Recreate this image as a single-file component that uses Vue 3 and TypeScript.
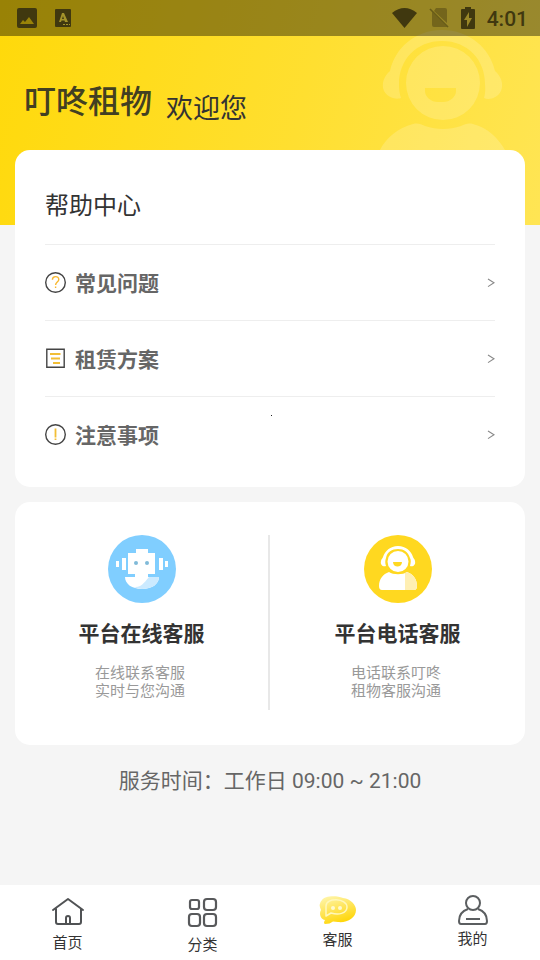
<script setup lang="ts">
interface HelpItem {
  icon: 'question' | 'plan' | 'notice'
  label: string
}

interface Service {
  icon: 'robot' | 'agent'
  title: string
  lines: string[]
}

interface Tab {
  icon: 'home' | 'grid' | 'chat' | 'user'
  label: string
  active?: boolean
}

const helpItems: HelpItem[] = [
  { icon: 'question', label: '常见问题' },
  { icon: 'plan', label: '租赁方案' },
  { icon: 'notice', label: '注意事项' },
]

const services: Service[] = [
  { icon: 'robot', title: '平台在线客服', lines: ['在线联系客服', '实时与您沟通'] },
  { icon: 'agent', title: '平台电话客服', lines: ['电话联系叮咚', '租物客服沟通'] },
]

const tabs: Tab[] = [
  { icon: 'home', label: '首页' },
  { icon: 'grid', label: '分类' },
  { icon: 'chat', label: '客服', active: true },
  { icon: 'user', label: '我的' },
]
</script>

<template>
  <div class="page">
    <header class="hero">
      <svg class="hero-art" width="130" height="125" viewBox="378 25 130 125" aria-hidden="true">
        <g fill="#fff" fill-opacity=".18">
          <path fill-rule="evenodd" d="M443 46a37 37 0 1 1 0 74a37 37 0 1 1 0-74zM425 88v3c0 6 6 11 13 11h5c7 0 13-5 13-11v-3z" />
          <path d="M401 98c-2 1-12 2-17-7c-3-7 0-15 6-20c5-23 25-41 52-41s48 18 53 41c6 5 9 13 6 20c-4 8-13 9-17 7c2-6 1-13 1-14c0-24-17-43-43-43s-43 19-43 43c0 1 0 8 2 14z" />
          <path d="M380 150c6-12 18-22 33-26c5-1 8 0 12 2c12 4 24 4 36 0c4-2 7-3 12-2c15 4 25 14 32 26z" />
        </g>
      </svg>

      <div class="status">
        <div class="status-left">
          <svg width="20" height="20" viewBox="0 0 20 20" aria-hidden="true">
            <path fill="currentColor" fill-rule="evenodd" d="M2 0h16q2 0 2 2v16q0 2-2 2H2q-2 0-2-2V2Q0 0 2 0zM3 16h14l-5-7-4 5-2-2z" />
          </svg>
          <svg width="16" height="18" viewBox="0 0 16 18" aria-hidden="true">
            <path fill="currentColor" d="M1 0h14q1 0 1 1v16q0 1-1 1H1q-1 0-1-1V1Q0 0 1 0z" />
            <path fill="#a3932a" fill-rule="evenodd" d="M7 4h2l4 9h-3l-.5-1.500h-3L6 13H4zM8 7l-1 3h2z" />
            <path fill="#a3932a" d="M8 15h2v1H8zM11 15h2v1h-2zM14 15h1v1h-1z" />
          </svg>
        </div>
        <div class="status-right">
          <svg width="25" height="20" viewBox="0 0 25 20" aria-hidden="true">
            <path fill="currentColor" d="M0 5Q12.500-5 25 5L12.500 20z" />
          </svg>
          <svg width="20" height="20" viewBox="0 0 20 20" aria-hidden="true">
            <path fill="currentColor" fill-opacity=".42" d="M7 0h9q2 0 2 2v13L5 3zM3 4l15 15H5q-2 0-2-2z" />
            <path stroke="currentColor" stroke-opacity=".55" stroke-width="1.6" d="M1 1l18 18" />
          </svg>
          <svg width="14" height="22" viewBox="0 0 14 22" aria-hidden="true">
            <path fill="currentColor" fill-rule="evenodd" d="M4 0h6v2h3q1 0 1 1v18q0 1-1 1H1q-1 0-1-1V3q0-1 1-1h3zM8 5l-5 8h3v7l5-9H8z" />
          </svg>
          <time class="clock">4:01</time>
        </div>
      </div>

      <h1 class="brand">
        <span class="brand-name">叮咚租物</span>
        <span class="brand-welcome">欢迎您</span>
      </h1>
    </header>

    <main class="content">
      <section class="card help">
        <h2 class="help-title">帮助中心</h2>
        <a v-for="item in helpItems" :key="item.label" class="help-row" href="#">
          <svg class="help-icon" width="21" height="21" viewBox="0 0 21 21" fill="none" aria-hidden="true">
            <template v-if="item.icon === 'question'">
              <circle cx="10.5" cy="10.5" r="9.8" stroke="#444" stroke-width="1.4" />
              <path stroke="#f8b830" stroke-width="1.4" d="M7.4 7.8c0-4.200 6.400-4.200 6.400-.4c0 2.600-3.200 2.700-3.200 5.600M10.600 14.500v1.600" />
            </template>
            <template v-else-if="item.icon === 'plan'">
              <path stroke="#444" stroke-width="1.4" d="M1.800 1.300h17.400v18H1.800z" />
              <path stroke="#f2be35" stroke-width="1.8" d="M5 6h10.500M6 10.500h9M8 15h7" />
            </template>
            <template v-else>
              <circle cx="10.5" cy="10.5" r="9.8" stroke="#444" stroke-width="1.4" />
              <path stroke="#f2be35" stroke-width="1.8" d="M10.500 4.500v9M10.500 14.500v1.500" />
            </template>
          </svg>
          <span class="help-label">{{ item.label }}</span>
          <svg class="help-arrow" width="8" height="10" viewBox="0 0 8 10" fill="none" stroke="#888" stroke-width="1.1" aria-hidden="true">
            <path d="M1 1l6 3.800L1 8.600" />
          </svg>
        </a>
        <i class="speck"></i>
      </section>

      <section class="card services">
        <button v-for="service in services" :key="service.title" class="service" type="button">
          <svg v-if="service.icon === 'robot'" width="68" height="68" viewBox="0 0 68 68" aria-hidden="true">
            <circle cx="34" cy="34" r="34" fill="#80ceff" />
            <path fill="#fff" d="M28 14h12v4h7v21h-7v3h11c0 7-7 12-17 12s-17-5-17-12h10v-3h-7V18h8zM14 23h4v12h-4zM8 26h3v6H8zM51 23h4v12h-4zM57 26h3v6h-3z" />
            <path fill="#cbeaff" d="M41 42h10c0 7-7 12-17 12q-4 0-8-2c8 1 12-7 15-10z" />
            <circle cx="28" cy="28" r="2" fill="#80bad8" />
            <circle cx="39" cy="28" r="2" fill="#80bad8" />
          </svg>
          <svg v-else width="68" height="68" viewBox="0 0 68 68" aria-hidden="true">
            <circle cx="34" cy="34" r="34" fill="#ffd820" />
            <path fill="#fff" fill-rule="evenodd" d="M34 16a10.500 10.500 0 1 1 0 21a10.500 10.500 0 1 1 0-21zM29 27c0 6 9 6 9 0z" />
            <path fill="#fff" d="M22 31c-3 1-6-1-5-5c0-2 2-3 2-4c2-6 7-11 15-11s13 5 15 11c0 1 2 2 2 4c1 4-2 6-5 5c1-4 1-6 0-8c-2-6-6-9-12-9s-11 3-12 9c-1 3-1 5 0 8z" />
            <path fill="#fff" d="M25 37c4 3 14 3 18 0c6 2 10 7 10 14q0 4-3 4H18q-3 0-3-4c0-7 4-12 10-14z" />
            <path fill="#ffefb3" d="M41 38l2-1c6 2 10 7 10 14q0 4-3 4H41z" />
          </svg>
          <span class="service-title">{{ service.title }}</span>
          <span class="service-text">
            <span v-for="line in service.lines" :key="line">{{ line }}</span>
          </span>
        </button>
      </section>

      <p class="hours">服务时间：工作日 09:00 ~ 21:00</p>
    </main>

    <nav class="tabs">
      <a v-for="tab in tabs" :key="tab.label" class="tab" href="#" :aria-current="tab.active ? 'page' : undefined">
        <svg v-if="tab.icon === 'home'" width="40" height="34" viewBox="0 0 40 34" fill="none" stroke="#505254" stroke-width="2" stroke-linejoin="round" stroke-linecap="round" aria-hidden="true">
          <path d="M5 15L20 4l15 11M8 14v13q0 2 2 2h21q2 0 2-2V14" />
          <path d="M18 29v-6q0-2 2-2t2 2v6" />
        </svg>
        <svg v-else-if="tab.icon === 'grid'" width="40" height="36" viewBox="0 0 40 36" fill="none" stroke="#58595b" stroke-width="2.2" aria-hidden="true">
          <rect x="7" y="5" width="9" height="9" rx="2" />
          <rect x="21" y="4" width="12" height="11" rx="3" />
          <rect x="6" y="19" width="11" height="12" rx="3" />
          <rect x="21" y="19" width="12" height="12" rx="3" />
        </svg>
        <svg v-else-if="tab.icon === 'chat'" width="40" height="31" viewBox="0 0 40 31" fill="none" aria-hidden="true">
          <defs>
            <linearGradient id="chat-fill" x1=".2" y1="0" x2=".6" y2="1">
              <stop offset="0" stop-color="#fff5a8" />
              <stop offset=".5" stop-color="#ffe456" />
              <stop offset="1" stop-color="#ffd500" />
            </linearGradient>
          </defs>
          <path fill="url(#chat-fill)" d="M4 5C6 1 18 0 25 3c8 1 13 7 13 12c0 8-9 13-18 12l-5-.500Q12 29 7 29q-2-1 0-4C2 24 1 18 3 15Q0 9 4 5z" />
          <path stroke="#fff7bb" stroke-width="1.500" stroke-linejoin="round" d="M8 21V11c0-9 21-8 21 1c0 7-9 8-16 6z" />
          <g fill="#fff9cf"><circle cx="15" cy="13" r="2" /><circle cx="22" cy="13" r="2" /></g>
        </svg>
        <svg v-else width="40" height="30" viewBox="0 0 40 30" fill="none" stroke="#5b5e60" stroke-width="2" aria-hidden="true">
          <circle cx="20" cy="8" r="7" />
          <path stroke-linejoin="round" d="M15 14C9 16 6 20 6 26q0 3 2 3h24q2 0 2-3c0-6-3-10-9-12M13 24h14" />
        </svg>
        <span class="tab-label">{{ tab.label }}</span>
      </a>
    </nav>
  </div>
</template>

<style>
body {
  margin: 0;
  background: #f5f5f5;
}
</style>

<style scoped>
.page {
  display: flex;
  flex-direction: column;
  min-height: 100vh;
  font-family: Roboto, "Noto Sans CJK SC", sans-serif;
  color: #333;
}

a {
  color: inherit;
  text-decoration: none;
}

.hero {
  position: relative;
  box-sizing: border-box;
  height: 225px;
  background: linear-gradient(105deg, #ffd90a, #ffdf30 55%, #ffe554);
}

.hero-art {
  position: absolute;
  top: 25px;
  right: 32px;
}

.status {
  position: relative;
  display: flex;
  justify-content: space-between;
  align-items: center;
  height: 36px;
  padding: 0 12px 0 17px;
  background: rgba(0, 0, 0, 0.4);
  color: #40380f;
}

.status-left {
  display: flex;
  align-items: center;
  gap: 18px;
}

.status-right {
  display: flex;
  align-items: center;
  gap: 12px;
}

.clock {
  padding-top: 2px;
  font-size: 21px;
  font-weight: 500;
  line-height: 34px;
}

.brand {
  display: flex;
  align-items: flex-start;
  gap: 14px;
  margin: 0;
  padding: 46px 24px 0;
  font-weight: 400;
}

.brand-name {
  font-size: 32px;
  font-weight: 500;
  line-height: 40px;
  color: #424022;
}

.brand-welcome {
  padding-top: 7px;
  font-size: 27px;
  line-height: 40px;
}

.content {
  position: relative;
  flex: 1;
  display: flex;
  flex-direction: column;
  gap: 15px;
  margin-top: -75px;
  padding: 0 15px;
}

.card {
  position: relative;
  border-radius: 15px;
  background: #fff;
}

.help {
  padding: 19px 30px 15px;
}

.help-title {
  margin: 0;
  font-size: 24px;
  font-weight: 400;
  line-height: 75px;
}

.help-row {
  display: flex;
  align-items: center;
  height: 75px;
  border-top: 1px solid #eee;
}

.help-label {
  flex: 1;
  margin-left: 9px;
  padding-bottom: 2px;
  font-size: 21px;
  font-weight: 700;
  color: #666;
}

.speck {
  position: absolute;
  top: 265px;
  left: 256px;
  width: 1px;
  height: 1px;
  background: #222;
}

.services {
  display: grid;
  grid-template-columns: 1fr 1fr;
  padding: 33px 0 35px;
}

.service {
  display: flex;
  flex-direction: column;
  align-items: center;
  height: 175px;
  padding: 0;
  border: 0;
  background: none;
  font-family: inherit;
  color: inherit;
}

.service:first-child {
  border-right: 2px solid #e8e8e8;
}

.service-title {
  margin-top: 15px;
  font-size: 21px;
  font-weight: 700;
  line-height: 32px;
}

.service-text {
  display: flex;
  flex-direction: column;
  margin-top: 14px;
  padding-right: 3px;
  font-size: 15px;
  line-height: 18px;
  color: #999;
}

.hours {
  margin: 0;
  padding-top: 5px;
  font-size: 21px;
  line-height: 32px;
  text-align: center;
  color: #666;
}

.tabs {
  display: grid;
  grid-template-columns: repeat(4, 1fr);
  box-sizing: border-box;
  height: 75px;
  padding-top: 10px;
  background: #fff;
}

.tab {
  display: flex;
  flex-direction: column;
  align-items: center;
  gap: 4px;
}

.tab-label {
  font-size: 15px;
  line-height: 20px;
}
</style>
